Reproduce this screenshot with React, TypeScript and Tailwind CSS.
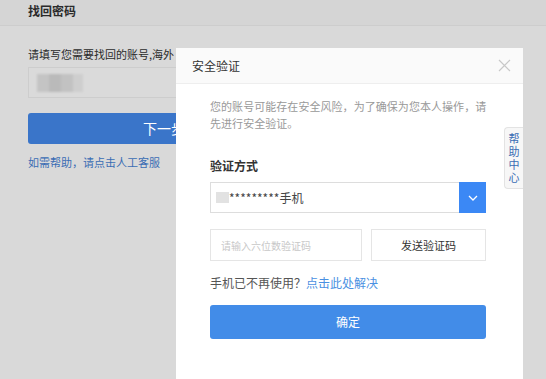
import React from 'react';

const font = { fontFamily: '"Noto Sans CJK SC", "Liberation Sans", sans-serif' };

const BackgroundPage: React.FC = () => (
  <div className="min-h-[379px] bg-[#d9d9d9]">
    <div className="h-[26px] bg-[#d5d5d5] border-b border-[#cdcdcd] px-[28px] flex items-center">
      <span className="text-[12px] font-bold text-[#2b2b2b] leading-none -mt-[4px]">找回密码</span>
    </div>
    <div className="px-[28px] pt-[21px]">
      <p className="w-[146px] overflow-hidden whitespace-nowrap text-[11px] text-[#2b2b2b] leading-[14px]">
        请填写您需要找回的账号,海外用户请
      </p>
      <div className="mt-[6px] w-[272px] h-[31px] border border-[#cdcdcd] bg-[#dadada] flex items-center px-[8px]">
        <div className="flex blur-[1px]">
          <div className="w-[12px] h-[18px] bg-[#c4c4c4]" />
          <div className="w-[12px] h-[18px] bg-[#bababa]" />
          <div className="w-[12px] h-[18px] bg-[#c2c2c2]" />
          <div className="w-[10px] h-[18px] bg-[#cecece]" />
        </div>
      </div>
      <button className="mt-[15px] w-[272px] h-[31px] rounded-[3px] bg-[#3a75c9] text-white text-[14px] flex items-center justify-center">
        下一步
      </button>
      <p className="mt-[11px] text-[11px] text-[#3b6db4] leading-[14px]">如需帮助，请点击人工客服</p>
    </div>
  </div>
);

const Chevron: React.FC = () => (
  <svg width="10" height="6" viewBox="0 0 10 6" fill="none">
    <path d="M1 1l4 4 4-4" stroke="white" strokeWidth="1.3" />
  </svg>
);

const Modal: React.FC = () => (
  <div className="absolute left-[176px] top-[48px] w-[347px] h-[340px] bg-white">
    <div className="h-[36px] bg-[#fafafa] border-b border-[#eeeeee] flex items-center justify-between pl-[16px] pr-[12px]">
      <span className="text-[12px] text-[#333]">安全验证</span>
      <svg width="13" height="13" viewBox="0 0 13 13">
        <path d="M1 1l11 11M12 1L1 12" stroke="#c8c8c8" strokeWidth="1.2" />
      </svg>
    </div>
    <div className="px-[34px] pt-[14px]">
      <p className="text-[11px] text-[#999] leading-[17px] whitespace-nowrap tracking-[0.05px]">
        您的账号可能存在安全风险，为了确保为您本人操作，请
        <br />
        先进行安全验证。
      </p>
      <p className="mt-[27px] text-[12px] font-bold text-[#333] leading-[14px]">验证方式</p>
      <div className="mt-[9px] w-[276px] h-[31px] border border-[#dddddd] flex items-stretch">
        <div className="flex-1 flex items-center pl-[5px]">
          <div className="w-[13px] h-[11px] bg-[#e2e2e2]" />
          <span className="text-[12px] text-[#444] leading-none">*********手机</span>
        </div>
        <div className="w-[27px] bg-[#3b88f5] flex items-center justify-center -my-px -mr-px">
          <Chevron />
        </div>
      </div>
      <div className="mt-[16px] flex gap-[9px]">
        <div className="w-[152px] h-[32px] border border-[#e5e5e5] flex items-center pl-[10px]">
          <span className="text-[10px] text-[#c8c8c8]">请输入六位数验证码</span>
        </div>
        <button className="w-[115px] h-[32px] border border-[#e5e5e5] text-[11px] text-[#333] flex items-center justify-center">
          发送验证码
        </button>
      </div>
      <p className="mt-[15px] text-[12px] text-[#555] leading-[14px]">
        手机已不再使用？<span className="text-[#4a90e2]">点击此处解决</span>
      </p>
      <button className="mt-[15px] w-[276px] h-[34px] rounded-[3px] bg-[#428ce8] text-white text-[12px] flex items-center justify-center">
        确定
      </button>
    </div>
    <div className="absolute right-0 top-[79px] w-[19px] h-[62px] bg-[#f7f7f7] border border-r-0 border-[#e3e3e3] rounded-l-[4px] flex flex-col items-center justify-center">
      <span className="text-[11px] text-[#3b6db4] leading-[13px] w-[11px] text-center">帮助中心</span>
    </div>
  </div>
);

export default function App() {
  return (
    <div className="relative w-[546px] h-[379px] overflow-hidden" style={font}>
      <BackgroundPage />
      <Modal />
    </div>
  );
}
